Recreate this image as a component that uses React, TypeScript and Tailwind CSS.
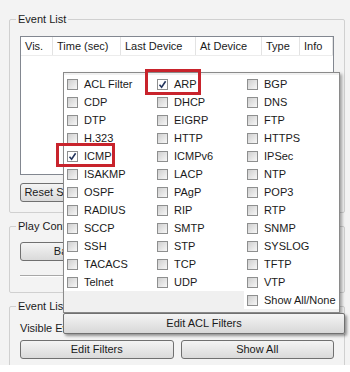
import React from "react";

const rows: (string | null)[][] = [
  ["ACL Filter", "ARP", "BGP"],
  ["CDP", "DHCP", "DNS"],
  ["DTP", "EIGRP", "FTP"],
  ["H.323", "HTTP", "HTTPS"],
  ["ICMP", "ICMPv6", "IPSec"],
  ["ISAKMP", "LACP", "NTP"],
  ["OSPF", "PAgP", "POP3"],
  ["RADIUS", "RIP", "RTP"],
  ["SCCP", "SMTP", "SNMP"],
  ["SSH", "STP", "SYSLOG"],
  ["TACACS", "TCP", "TFTP"],
  ["Telnet", "UDP", "VTP"],
  [null, null, "Show All/None"],
];

const checked = new Set(["ARP", "ICMP"]);

function Box({ on }: { on: boolean }) {
  if (on) {
    return (
      <span className="w-[11px] h-[11px] border border-[#8e8f8f] bg-white flex items-center justify-center shrink-0">
        <svg width="9" height="9" viewBox="0 0 9 9">
          <path d="M1.5 4.8 L3.6 7.2 L7.6 1.2" fill="none" stroke="#24365e" strokeWidth="1.6" />
        </svg>
      </span>
    );
  }
  return (
    <span className="w-[11px] h-[11px] border border-[#8e8f8f] bg-linear-to-br from-[#cfcfcf] to-[#f7f7f7] shrink-0" />
  );
}

function Btn({ children, className }: { children: React.ReactNode; className?: string }) {
  return (
    <div
      className={
        "h-[19px] rounded-[3px] border border-[#707070] bg-linear-to-b from-[#f4f4f4] to-[#dadada] flex items-center justify-center whitespace-nowrap overflow-hidden " +
        (className ?? "")
      }
    >
      {children}
    </div>
  );
}

export default function App() {
  const cols = [
    { t: "Vis.", w: "w-[32px]" },
    { t: "Time (sec)", w: "w-[68px]" },
    { t: "Last Device", w: "w-[75px]" },
    { t: "At Device", w: "w-[66px]" },
    { t: "Type", w: "w-[38px]" },
    { t: "Info", w: "flex-1" },
  ];
  return (
    <div className="w-[350px] h-[372px] bg-white relative overflow-hidden font-['Liberation_Sans',Arial,sans-serif] text-[11px] leading-[13px] text-[#1a1a1a]">
      <div className="h-[365px] bg-[#f3f3f3] pt-[13px] pl-[9px] pr-[5px] flex flex-col overflow-hidden">
        {/* Event List */}
        <fieldset className="border border-[#d0d0d0] rounded-[2px] px-[10px] pt-[10px] pb-[10px] min-w-0">
          <legend className="ml-[-4px] px-[2px]">Event List</legend>
          <div className="h-[139px] border border-[#828790] bg-white flex flex-col">
            <div className="h-[19px] flex border-b border-[#ececec]">
              {cols.map((c) => (
                <div key={c.t} className={c.w + " pl-[4px] flex items-center border-r border-[#e3e3e3] whitespace-nowrap"}>
                  {c.t}
                </div>
              ))}
            </div>
          </div>
          <div className="mt-[8px] flex">
            <Btn className="w-[92px]">Reset Simulation</Btn>
          </div>
        </fieldset>

        {/* Play Control */}
        <fieldset className="mt-[7px] border border-[#d0d0d0] rounded-[2px] px-[10px] pt-[9px] pb-[15px] min-w-0">
          <legend className="ml-[-4px] px-[2px]">Play Controls</legend>
          <div className="flex gap-[8px]">
            <Btn className="w-[94px]">Back</Btn>
            <Btn className="w-[110px]">Auto Capture / Play</Btn>
            <Btn className="w-[100px]">Capture / Forward</Btn>
          </div>
          <div className="mt-[14px] h-[2px] border-t border-[#a8a8a8] border-b border-b-white" />
        </fieldset>

        {/* Event List Filters */}
        <fieldset className="mt-[7px] border border-[#d0d0d0] rounded-[2px] px-[10px] pt-[9px] pb-[20px] min-w-0">
          <legend className="ml-[-4px] px-[2px] whitespace-nowrap">Event List Filters - Visible Events</legend>
          <div className="whitespace-nowrap">Visible Events: ARP, ICMP</div>
          <div className="mt-[5px] flex gap-[7px]">
            <Btn className="w-[155px] h-[18px]">Edit Filters</Btn>
            <Btn className="w-[155px] h-[18px]">Show All</Btn>
          </div>
        </fieldset>
      </div>

      {/* Filter popup */}
      <div className="absolute left-[63px] top-[72px] w-[282px] flex flex-col">
        <div className="w-[277px] border border-[#8a8a8a] bg-[#f0f0f0] pt-[2px] pb-[3px] shadow-[2px_2px_3px_rgba(0,0,0,0.35)]">
          <div className="grid grid-cols-[90px_90px_1fr]">
            {rows.flatMap((r, ri) =>
              r.map((name, ci) =>
                name ? (
                  <div key={ri + "-" + ci} className="h-[18px] bg-white flex items-center pl-[3px] gap-[6px] whitespace-nowrap">
                    <Box on={checked.has(name)} />
                    <span>{name}</span>
                  </div>
                ) : (
                  <div key={ri + "-" + ci} className="h-[18px]" />
                )
              )
            )}
          </div>
        </div>
        <div className="h-[21px] border border-[#707070] rounded-[2px] bg-linear-to-b from-[#f4f4f4] to-[#d8d8d8] flex items-center justify-center shadow-[2px_2px_3px_rgba(0,0,0,0.4)]">
          Edit ACL Filters
        </div>
      </div>

      {/* Red highlight boxes */}
      <div className="absolute left-[145px] top-[69px] w-[56px] h-[26px] border-[3px] border-[#c8232c]" />
      <div className="absolute left-[56px] top-[143px] w-[59px] h-[24px] border-[3px] border-[#c8232c]" />
    </div>
  );
}
